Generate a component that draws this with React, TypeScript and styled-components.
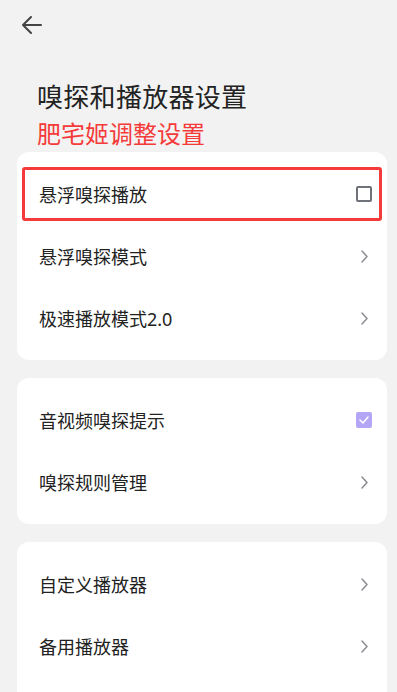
import React from "react";
import styled, { createGlobalStyle } from "styled-components";

const GlobalStyle = createGlobalStyle`
  html, body {
    margin: 0;
    padding: 0;
    background: #f2f2f2;
  }
  body {
    font-family: "Noto Sans", "Noto Sans CJK SC", sans-serif;
  }
`;

const Page = styled.div`
  width: 397px;
  height: 692px;
  overflow: hidden;
  background: #f2f2f2;
  box-sizing: border-box;
  padding: 0 10px 0 17px;
  display: flex;
  flex-direction: column;
`;

const TopBar = styled.div`
  height: 50px;
  flex-shrink: 0;
  display: flex;
  align-items: center;
  padding-left: 5px;
`;

const BackButton = styled.button`
  border: none;
  background: none;
  padding: 0;
  width: 20px;
  height: 20px;
  display: flex;
  align-items: center;
  color: #444;
`;

const Title = styled.h1`
  margin: 30px 0 0 20px;
  font-size: 26px;
  font-weight: 400;
  line-height: 34px;
  color: #222;
  letter-spacing: 0.3px;
`;

const Subtitle = styled.div`
  margin: 3px 0 1px 20px;
  font-size: 24px;
  line-height: 34px;
  color: #f53a3a;
`;

const Card = styled.div`
  background: #fff;
  border-radius: 12px;
  padding: 11px 0;
  margin-bottom: 18px;
  width: 370px;
  flex-shrink: 0;
  &:last-child {
    flex: 1;
    margin-bottom: 0;
    border-radius: 12px 12px 0 0;
  }
`;

const Row = styled.div<{ $highlight?: boolean }>`
  height: 62px;
  display: flex;
  align-items: center;
  justify-content: space-between;
  padding: 0 15px 0 22px;
  box-sizing: border-box;
  position: relative;
  ${(p) =>
    p.$highlight &&
    `
    &::after {
      content: "";
      position: absolute;
      left: 5px;
      right: 5px;
      top: 4px;
      bottom: 4px;
      border: 3px solid #f53a3a;
      border-radius: 3px;
    }
  `}
`;

const Label = styled.span`
  font-size: 18px;
  color: #222;
`;

const Box = styled.span<{ $checked?: boolean }>`
  width: 16px;
  height: 16px;
  box-sizing: border-box;
  border-radius: 2px;
  border: ${(p) => (p.$checked ? "none" : "2px solid #6f7279")};
  background: ${(p) => (p.$checked ? "#b4a5f7" : "transparent")};
  display: flex;
  align-items: center;
  justify-content: center;
`;

const Chevron = styled.span`
  display: flex;
  margin-right: 4px;
`;

const ArrowLeft = () => (
  <svg width="20" height="20" viewBox="0 0 20 20" fill="none">
    <path d="M19 10H2M9 2l-8 8 8 8" stroke="#444" strokeWidth="2" strokeLinecap="round" strokeLinejoin="round" />
  </svg>
);

const ChevronRight = () => (
  <svg width="7" height="13" viewBox="0 0 7 13" fill="none">
    <path d="M1 1l5 5.5L1 12" stroke="#8a8c92" strokeWidth="1.5" strokeLinecap="round" strokeLinejoin="round" />
  </svg>
);

const Check = () => (
  <svg width="10" height="8" viewBox="0 0 10 8" fill="none">
    <path d="M1 4l3 3 5-6" stroke="#fff" strokeWidth="1.5" strokeLinecap="round" strokeLinejoin="round" />
  </svg>
);

type Item = { label: string; type: "box" | "checked" | "link"; highlight?: boolean };

const groups: Item[][] = [
  [
    { label: "悬浮嗅探播放", type: "box", highlight: true },
    { label: "悬浮嗅探模式", type: "link" },
    { label: "极速播放模式2.0", type: "link" },
  ],
  [
    { label: "音视频嗅探提示", type: "checked" },
    { label: "嗅探规则管理", type: "link" },
  ],
  [
    { label: "自定义播放器", type: "link" },
    { label: "备用播放器", type: "link" },
  ],
];

export default function App() {
  return (
    <Page>
      <GlobalStyle />
      <TopBar>
        <BackButton>
          <ArrowLeft />
        </BackButton>
      </TopBar>
      <Title>嗅探和播放器设置</Title>
      <Subtitle>肥宅姬调整设置</Subtitle>
      {groups.map((group, i) => (
        <Card key={i}>
          {group.map((item) => (
            <Row key={item.label} $highlight={item.highlight}>
              <Label>{item.label}</Label>
              {item.type === "link" ? (
                <Chevron>
                  <ChevronRight />
                </Chevron>
              ) : (
                <Box $checked={item.type === "checked"}>{item.type === "checked" && <Check />}</Box>
              )}
            </Row>
          ))}
        </Card>
      ))}
    </Page>
  );
}
